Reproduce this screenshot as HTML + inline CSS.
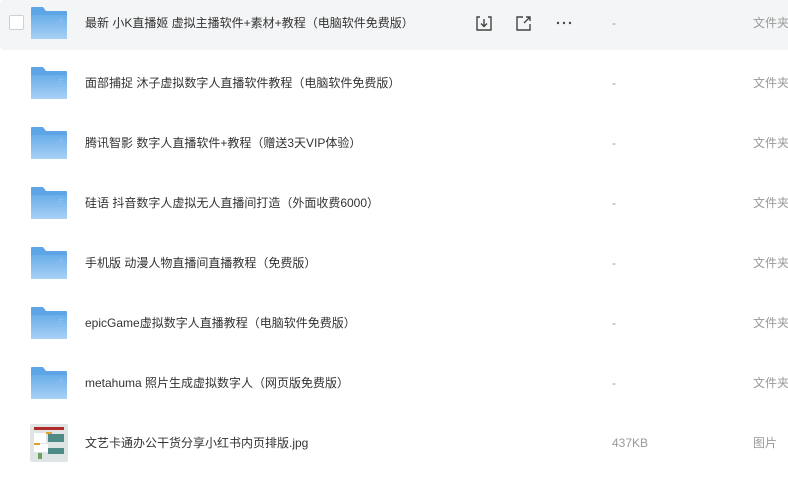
<!DOCTYPE html>
<html><head><meta charset="utf-8"><style>
body{margin:0;width:788px;height:493px;background:#fff;font-family:"Liberation Sans","Noto Sans CJK SC",sans-serif;overflow:hidden;position:relative}
.row{position:absolute;left:0;width:800px;height:50px}
.hl{background:#f4f5f6;border-radius:4px}
.name{position:absolute;left:85px;top:0;line-height:46px;font-size:12px;color:#333}
.sz{position:absolute;left:612px;line-height:46px;font-size:12px;color:#999}
.ty{position:absolute;left:753px;line-height:46px;font-size:12px;color:#999;white-space:nowrap}
.fold{position:absolute;left:31px;top:7px;width:36px;height:32px}
.cb{position:absolute;left:9px;top:15px;width:13px;height:13px;border:1px solid #d0d0d0;border-radius:2px;background:#fff}
.ic{position:absolute;top:14px}
</style></head><body>
<svg width="0" height="0" style="position:absolute"><defs>
<linearGradient id="g" x1="0" y1="0" x2="0" y2="1"><stop offset="0" stop-color="#6aaeea"/><stop offset="1" stop-color="#a9d0f5"/></linearGradient>
<symbol id="f" viewBox="0 0 36 32"><path d="M0 1Q0 0 1 0H12L15 4H35Q36 4 36 5V31Q36 32 35 32H1Q0 32 0 31Z" fill="#5ea5e8"/><path d="M0 8H35Q36 8 36 9V31Q36 32 35 32H1Q0 32 0 31Z" fill="url(#g)"/><rect x="28" y="12" width="4" height="1" fill="#8fbfea"/><rect x="28" y="14" width="4" height="1" fill="#8fbfea"/></symbol>
</defs></svg>

<div class="row hl" style="top:0">
<div class="cb"></div>
<svg class="fold"><use href="#f"/></svg>
<div class="name">最新 小K直播姬 虚拟主播软件+素材+教程（电脑软件免费版）</div>
<svg class="ic" style="left:475px" width="18" height="18" viewBox="0 0 18 18" fill="none" stroke="#444" stroke-width="1.4"><path d="M5 3H2V16H16V3H13"/><path d="M9 5V12M6 9.5L9 12.5L12 9.5"/></svg>
<svg class="ic" style="left:515px" width="18" height="18" viewBox="0 0 18 18" fill="none" stroke="#444" stroke-width="1.4"><path d="M8 3H2V16H15V10"/><path d="M9 9L15 3M11 3H15V7"/></svg>
<svg class="ic" style="left:556px;top:21px" width="16" height="4" viewBox="0 0 16 4" fill="#444"><circle cx="2" cy="2" r="1.2"/><circle cx="8" cy="2" r="1.2"/><circle cx="14" cy="2" r="1.2"/></svg>
<div class="sz">-</div><div class="ty">文件夹</div></div>

<div class="row" style="top:60px"><svg class="fold"><use href="#f"/></svg><div class="name">面部捕捉 沐子虚拟数字人直播软件教程（电脑软件免费版）</div><div class="sz">-</div><div class="ty">文件夹</div></div>
<div class="row" style="top:120px"><svg class="fold"><use href="#f"/></svg><div class="name">腾讯智影 数字人直播软件+教程（赠送3天VIP体验）</div><div class="sz">-</div><div class="ty">文件夹</div></div>
<div class="row" style="top:180px"><svg class="fold"><use href="#f"/></svg><div class="name">硅语 抖音数字人虚拟无人直播间打造（外面收费6000）</div><div class="sz">-</div><div class="ty">文件夹</div></div>
<div class="row" style="top:240px"><svg class="fold"><use href="#f"/></svg><div class="name">手机版 动漫人物直播间直播教程（免费版）</div><div class="sz">-</div><div class="ty">文件夹</div></div>
<div class="row" style="top:300px"><svg class="fold"><use href="#f"/></svg><div class="name">epicGame虚拟数字人直播教程（电脑软件免费版）</div><div class="sz">-</div><div class="ty">文件夹</div></div>
<div class="row" style="top:360px"><svg class="fold"><use href="#f"/></svg><div class="name">metahuma 照片生成虚拟数字人（网页版免费版）</div><div class="sz">-</div><div class="ty">文件夹</div></div>
<div class="row" style="top:420px">
<svg style="position:absolute;left:30px;top:4px" width="38" height="38" viewBox="0 0 38 38"><rect x="0" y="0" width="38" height="38" rx="2" fill="#dfe5e4"/><rect x="4" y="3" width="30" height="3" fill="#b02a2a"/><rect x="18" y="10" width="16" height="8" fill="#4e8a86"/><rect x="4" y="9" width="12" height="10" fill="#fff"/><rect x="16" y="8" width="6" height="2" fill="#e0a030"/><rect x="4" y="20" width="14" height="8" fill="#fff"/><rect x="18" y="24" width="16" height="6" fill="#4e8a86"/><rect x="8" y="29" width="4" height="6" fill="#6aa060"/><rect x="4" y="19" width="6" height="2" fill="#e0a030"/></svg>
<div class="name">文艺卡通办公干货分享小红书内页排版.jpg</div><div class="sz">437KB</div><div class="ty">图片</div></div>
</body></html>
